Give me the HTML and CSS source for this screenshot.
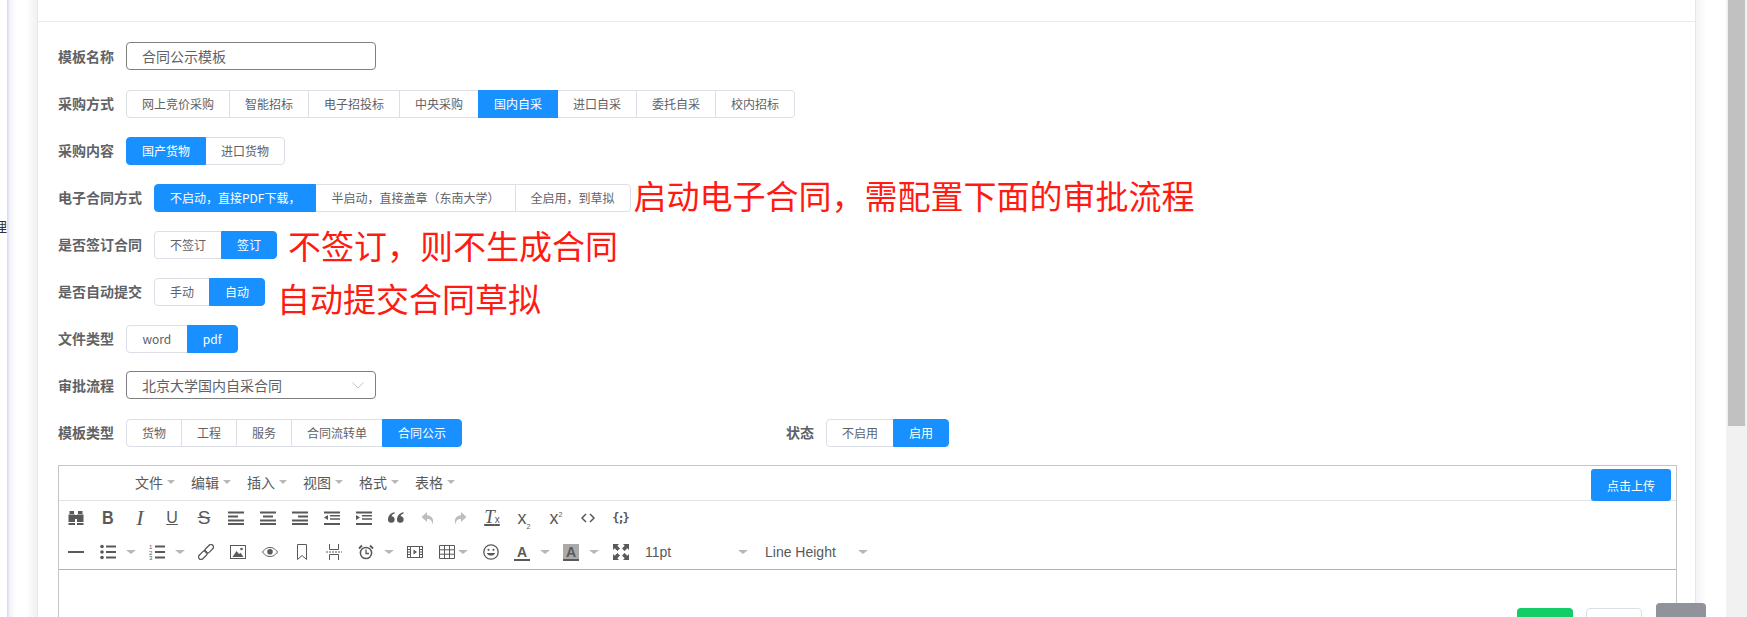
FILE: index.html
```html
<!DOCTYPE html>
<html lang="zh-CN">
<head>
<meta charset="utf-8">
<title>合同模板</title>
<link rel="stylesheet" href="styles.css">
</head>
<body>
<div class="page">
  <aside class="rail"><div class="rail-text"><span>管理</span></div></aside>
  <main class="card">
    <div class="card-head"></div>
    <div class="form">
      <div class="row">
        <label class="label">模板名称</label>
        <div class="box">合同公示模板</div>
      </div>
      <div class="row">
        <label class="label">采购方式</label>
        <div class="seg"><span class="opt">网上竞价采购</span><span class="opt">智能招标</span><span class="opt">电子招投标</span><span class="opt">中央采购</span><span class="opt on">国内自采</span><span class="opt">进口自采</span><span class="opt">委托自采</span><span class="opt">校内招标</span></div>
      </div>
      <div class="row">
        <label class="label">采购内容</label>
        <div class="seg"><span class="opt on">国产货物</span><span class="opt">进口货物</span></div>
      </div>
      <div class="row">
        <label class="label">电子合同方式</label>
        <div class="seg"><span class="opt on">不启动&#xFF0C;直接PDF下载&#xFF0C;</span><span class="opt">半启动&#xFF0C;直接盖章&#xFF08;东南大学&#xFF09;</span><span class="opt">全启用&#xFF0C;到草拟</span></div>
        <span class="note note-a">启动电子合同&#xFF0C;需配置下面的审批流程</span>
      </div>
      <div class="row">
        <label class="label">是否签订合同</label>
        <div class="seg"><span class="opt">不签订</span><span class="opt on">签订</span></div>
        <span class="note note-b">不签订&#xFF0C;则不生成合同</span>
      </div>
      <div class="row">
        <label class="label">是否自动提交</label>
        <div class="seg"><span class="opt">手动</span><span class="opt on">自动</span></div>
        <span class="note note-c">自动提交合同草拟</span>
      </div>
      <div class="row">
        <label class="label">文件类型</label>
        <div class="seg"><span class="opt opt-word">word</span><span class="opt on">pdf</span></div>
      </div>
      <div class="row">
        <label class="label">审批流程</label>
        <div class="box box-select">北京大学国内自采合同
          <svg class="chev" viewBox="0 0 12 7" width="12" height="7"><path d="M.5.5 6 6 11.5.5" fill="none" stroke="#c0c4cc"/></svg>
        </div>
      </div>
      <div class="row">
        <label class="label">模板类型</label>
        <div class="seg"><span class="opt">货物</span><span class="opt">工程</span><span class="opt">服务</span><span class="opt">合同流转单</span><span class="opt on">合同公示</span></div>
        <label class="label label-status">状态</label>
        <div class="seg"><span class="opt">不启用</span><span class="opt on">启用</span></div>
      </div>

      <section class="editor">
        <div class="menubar">
          <span class="menu">文件<i class="caret"></i></span>
          <span class="menu">编辑<i class="caret"></i></span>
          <span class="menu">插入<i class="caret"></i></span>
          <span class="menu">视图<i class="caret"></i></span>
          <span class="menu">格式<i class="caret"></i></span>
          <span class="menu">表格<i class="caret"></i></span>
          <button class="upload">点击上传</button>
        </div>
        <div class="toolbar">
          <span class="tb"><svg class="ico" viewBox="0 0 16 16"><path d="M1.500 1h4.500v3H1.500zM10 1h4.500v3H10zM.5 4.500H7V12H.5zM9 4.500h6.500V12H9zM7 5h2v4H7zM.5 13H7v2H.5zM9 13h6.500v2H9z"/></svg></span>
          <span class="tb"><span class="g g-b">B</span></span>
          <span class="tb"><span class="g g-i">I</span></span>
          <span class="tb"><span class="g g-u">U</span></span>
          <span class="tb"><span class="g g-s">S</span></span>
          <span class="tb"><svg class="ico" viewBox="0 0 16 16"><path d="M0 1.500h16v2H0zM0 5.500h10v2H0zM0 9.500h16v2H0zM0 13h16v2H0z"/></svg></span>
          <span class="tb"><svg class="ico" viewBox="0 0 16 16"><path d="M0 1.500h16v2H0zM3 5.500h10v2H3zM0 9.500h16v2H0zM0 13h16v2H0z"/></svg></span>
          <span class="tb"><svg class="ico" viewBox="0 0 16 16"><path d="M0 1.500h16v2H0zM6 5.500h10v2H6zM0 9.500h16v2H0zM0 13h16v2H0z"/></svg></span>
          <span class="tb"><svg class="ico" viewBox="0 0 16 16"><path d="M0 1.500h16v2H0zM6 5h10v1.600H6zM6 8.200h10v1.600H6zM0 13h16v2H0zM4 5v5L0 7.500z"/></svg></span>
          <span class="tb"><svg class="ico" viewBox="0 0 16 16"><path d="M0 1.500h16v2H0zM6 5h10v1.600H6zM6 8.200h10v1.600H6zM0 13h16v2H0zM0 5v5l4-2.500z"/></svg></span>
          <span class="tb"><svg class="ico" viewBox="0 0 16 16"><path d="M0 9.500a3.300 3.300 0 1 0 6.600 0A3.200 3.200 0 0 0 3.600 6.300C3.900 5 5 4 6.600 3.600V2.200C3 2.600 0 5.600 0 9.500zM9 9.500a3.300 3.300 0 1 0 6.600 0 3.200 3.200 0 0 0-3-3.200c.3-1.300 1.400-2.300 3-2.700V2.200C12 2.600 9 5.600 9 9.500z"/></svg></span>
          <span class="tb"><svg class="ico ico-off" viewBox="0 0 16 16"><path d="M7 2 1.500 7 7 12V9c3 0 5 1 5.500 5.500C14.500 9 11.500 5.500 7 5.200z"/></svg></span>
          <span class="tb"><svg class="ico ico-off" viewBox="0 0 16 16"><path d="M9 2l5.500 5L9 12V9c-3 0-5 1-5.500 5.500C1.500 9 4.500 5.500 9 5.200z"/></svg></span>
          <span class="tb"><span class="g g-t">T<small>x</small></span></span>
          <span class="tb"><span class="g g-x">x<sub>2</sub></span></span>
          <span class="tb"><span class="g g-x">x<sup>2</sup></span></span>
          <span class="tb"><svg class="ico" viewBox="0 0 16 16"><path d="M6 4 2 8l4 4M10 4l4 4-4 4" fill="none" stroke="#595959" stroke-width="1.500"/></svg></span>
          <span class="tb"><span class="g g-c">{;}</span></span>
        </div>
        <div class="toolbar toolbar-last">
          <span class="tb"><svg class="ico" viewBox="0 0 16 16"><path d="M0 7h16v2H0z"/></svg></span>
          <span class="tb"><svg class="ico" viewBox="0 0 16 16"><circle cx="2" cy="2.500" r="1.800"/><circle cx="2" cy="8" r="1.800"/><circle cx="2" cy="13.500" r="1.800"/><path d="M6 1.500h10v2H6zM6 7h10v2H6zM6 12.500h10v2H6z"/></svg></span>
          <span class="split"><i class="caret"></i></span>
          <span class="tb"><svg class="ico" viewBox="0 0 16 16"><text class="mini" x="0" y="5">1</text><text class="mini" x="0" y="10.500">2</text><text class="mini" x="0" y="16">3</text><path d="M6 1.500h10v2H6zM6 7h10v2H6zM6 12.500h10v2H6z"/></svg></span>
          <span class="split"><i class="caret"></i></span>
          <span class="tb"><svg class="ico" viewBox="0 0 16 16"><g transform="rotate(-45 8 8)" fill="none" stroke="#595959" stroke-width="1.300"><rect x="-1.500" y="5.500" width="10" height="5" rx="2.500"/><rect x="7.500" y="5.500" width="10" height="5" rx="2.500"/></g></svg></span>
          <span class="tb"><svg class="ico" viewBox="0 0 16 16"><rect x=".5" y="1.500" width="15" height="13" fill="none" stroke="#595959"/><path d="M2.500 13 6.500 7l2.500 3 1.500-1.200L13.500 13z"/><circle cx="11.500" cy="5" r="1.300"/></svg></span>
          <span class="tb"><svg class="ico" viewBox="0 0 16 16"><path d="M.5 8C3 4.500 5.500 3.500 8 3.500s5 1 7.500 4.500c-2.500 3.500-5 4.500-7.500 4.500S3 11.500.5 8z" fill="none" stroke="#595959"/><circle cx="8" cy="7.800" r="2.800"/></svg></span>
          <span class="tb"><svg class="ico" viewBox="0 0 16 16"><path d="M3.500 .5h9v15L8 11.500l-4.500 4z" fill="none" stroke="#595959"/></svg></span>
          <span class="tb"><svg class="ico" viewBox="0 0 16 16"><path d="M3.500 0v5.500h9V0M3.500 16v-5.500h9V16" fill="none" stroke="#595959"/><path d="M0 8h16" stroke="#595959" stroke-dasharray="2 1"/></svg></span>
          <span class="tb"><svg class="ico" viewBox="0 0 16 16"><circle cx="8" cy="9" r="5.600" fill="none" stroke="#595959" stroke-width="1.500"/><path d="M8 5.500v4h3" fill="none" stroke="#595959" stroke-width="1.300"/><path d="M1 4.500 4 1.500M15 4.500l-3-3" stroke="#595959" stroke-width="1.800"/></svg></span>
          <span class="split"><i class="caret"></i></span>
          <span class="tb"><svg class="ico" viewBox="0 0 16 16"><rect x=".5" y="2.500" width="15" height="11" fill="none" stroke="#595959"/><path d="M3.500 2.500v11M12.500 2.500v11M.5 5.500h3M.5 8h3M.5 10.500h3M12.500 5.500h3M12.500 8h3M12.500 10.500h3" fill="none" stroke="#595959"/><path d="M6.500 5.500v5L10 8z"/></svg></span>
          <span class="tb tb-table"><svg class="ico" viewBox="0 0 16 16"><path d="M.5 1.500h15v13H.5zM5.500 1.500v13M10.500 1.500v13M.5 5.800h15M.5 10.200h15" fill="none" stroke="#595959"/></svg></span>
          <span class="split split-table"><i class="caret"></i></span>
          <span class="tb tb-emoji"><svg class="ico" viewBox="0 0 16 16"><circle cx="8" cy="8" r="7.200" fill="none" stroke="#595959" stroke-width="1.300"/><circle cx="5.500" cy="5.800" r="1.100"/><circle cx="10.500" cy="5.800" r="1.100"/><path d="M3.800 9c1 3.400 7.400 3.400 8.400 0z"/></svg></span>
          <span class="tb"><span class="g g-a">A</span></span>
          <span class="split"><i class="caret"></i></span>
          <span class="tb"><span class="g g-a g-hl">A</span></span>
          <span class="split"><i class="caret"></i></span>
          <span class="tb tb-full"><svg class="ico" viewBox="0 0 16 16"><path d="M0 0h6L4.300 1.700 7 4.400 4.400 7 1.700 4.300 0 6z"/><path d="M16 0v6l-1.700-1.700L11.600 7 9 4.400l2.700-2.700L10 0zM0 16v-6l1.700 1.700L4.400 9 7 11.600l-2.700 2.700L6 16zM16 16h-6l1.700-1.700L9 11.600 11.600 9l2.700 2.700L16 10z"/></svg></span>
          <span class="pick pick-size">11pt<i class="caret"></i></span>
          <span class="pick pick-line">Line Height<i class="caret"></i></span>
        </div>
        <div class="edit-body"></div>
      </section>
    </div>
  </main>
  <div class="gutter"></div>
  <div class="scrollbar"><div class="thumb"></div></div>
</div>
<div class="actions">
  <button class="act act-save"></button>
  <button class="act act-cancel"></button>
  <button class="act act-back"></button>
</div>
</body>
</html>
```
FILE: styles.css
```css
* { box-sizing: border-box; }
html, body { margin: 0; height: 617px; overflow: hidden; background: #fff; }
body { position: relative; font-family: "Noto Sans CJK SC", "Liberation Sans", sans-serif; color: #606266; }

.page { display: flex; height: 617px; }

.rail {
  width: 37px; flex: none; padding-top: 216px;
  background: linear-gradient(90deg, #fff 7px, #d6d6f0 7px, #f3f3fa 10px, #fff 16px, #fff 26px, #f1f1f4 37px);
}
.rail-text { width: 7px; overflow: hidden; display: flex; justify-content: flex-end; font-size: 14px; line-height: 20px; color: #333; white-space: nowrap; }
.rail-text span { flex: none; }

.card { flex: 1; min-width: 0; background: #fff; border-left: 1px solid #e8e8f0; border-right: 1px solid #e6e6f0; }
.card-head { height: 22px; border-bottom: 1px solid #e8e8f0; }
.form { padding: 21px 18px 0 20px; }

.gutter { width: 30px; flex: none; background: linear-gradient(90deg, #f3f3f6, #fff 10px); }
.scrollbar { width: 21px; flex: none; background: #f1f1f1; padding-left: 2px; }
.thumb { width: 17px; height: 426px; background: #c1c1c1; }

.row { display: flex; align-items: center; height: 28px; margin-bottom: 19px; }
.label { font-size: 14px; font-weight: 700; line-height: 20px; margin-right: 12px; margin-top: -2px; white-space: nowrap; }
.label-status { margin-left: 324px; }

.box { position: relative; width: 250px; height: 28px; margin-top: -2px; padding-left: 15px; border: 1px solid #7f7f7f; border-radius: 4px; font-size: 14px; line-height: 26px; }
.box-select { display: flex; align-items: center; justify-content: space-between; padding-right: 11px; }

.seg { display: inline-flex; height: 28px; flex: none; }
.opt { display: block; height: 28px; padding: 0 15px; margin-left: -1px; border: 1px solid #dcdfe6; background: #fff; font-size: 12px; line-height: 26px; white-space: nowrap; }
.opt:first-child { margin-left: 0; border-radius: 4px 0 0 4px; }
.opt:last-child { border-radius: 0 4px 4px 0; }
.opt.on { position: relative; background: #1890ff; border-color: #1890ff; color: #fff; }
.opt-word { padding: 0 15.5px; }

.note { color: #ff1a12; font-size: 33px; line-height: 28px; white-space: nowrap; }
.note-a { margin-left: 3px; margin-top: -6px; }
.note-b { margin-left: 11px; margin-top: 0; }
.note-c { margin-left: 12px; margin-top: 12px; }

.editor { height: 200px; margin-top: -1px; border: 1px solid #c5c5c5; border-bottom: 0; }
.menubar { display: flex; align-items: center; height: 35px; padding: 0 0 2px 76px; border-bottom: 1px solid #e2e2e2; }
.menu { display: flex; align-items: center; gap: 4px; margin-right: 16px; font-size: 14px; line-height: 20px; color: #595959; }
.caret { display: block; width: 0; height: 0; flex: none; border-style: solid; border-width: 4px 4px 0; border-color: #b8b8b8 transparent transparent; }
.upload { align-self: flex-start; width: 80px; height: 32px; margin: 3px 5px 0 auto; padding: 0; border: 0; border-radius: 3px; background: #1890ff; color: #fff; font-family: inherit; font-size: 12px; }

.toolbar { display: flex; align-items: center; height: 34px; padding-left: 1px; }
.toolbar-last { border-bottom: 1px solid #b2b2b2; height: 35px; }
.tb { display: flex; align-items: center; justify-content: center; width: 32px; height: 24px; flex: none; }
.tb-table { width: 25px; justify-content: flex-start; padding-left: 8px; }
.tb-emoji { width: 31px; }
.tb-full { margin-left: 1px; }
.split { display: flex; align-items: center; width: 17px; height: 24px; padding-left: 2px; flex: none; }
.split .caret { border-width: 4px 5px 0; }
.split-table { width: 19px; padding-left: 2px; }
.ico { display: block; width: 16px; height: 16px; fill: #595959; }
.ico-off { fill: #bdbdbd; }
.mini { font-family: "Liberation Sans", sans-serif; font-size: 6px; fill: #595959; }

.g { display: block; color: #595959; font-family: "Liberation Sans", sans-serif; line-height: 16px; text-align: center; white-space: nowrap; }
.g-b { font-size: 19px; font-weight: 700; transform: scaleX(.85); }
.g-i { font-family: "Liberation Serif", serif; font-size: 22px; font-style: italic; }
.g-u { font-size: 16px; text-decoration: underline; }
.g-s { font-size: 19px; text-decoration: line-through; }
.g-t { font-family: "Liberation Serif", serif; font-size: 19px; font-style: italic; text-decoration: underline; text-decoration-thickness: 2px; }
.g-t small { font-family: "Liberation Sans", sans-serif; font-size: 10px; font-style: normal; }
.g-x { font-size: 18px; }
.g-x sub, .g-x sup { font-size: 7px; line-height: 0; }
.g-c { font-family: "DejaVu Sans Mono", monospace; font-size: 12px; font-weight: 700; letter-spacing: -2px; }
.g-a { width: 16px; height: 17px; font-size: 14px; font-weight: 700; border-bottom: 2px solid #595959; }
.g-hl { background: #aaa; }

.pick { display: flex; align-items: center; justify-content: space-between; width: 120px; height: 24px; flex: none; font-family: "Liberation Sans", sans-serif; font-size: 14px; color: #595959; }
.pick-size { padding: 0 9px 0 8px; }
.pick-line { padding: 0 9px 0 8px; }
.pick .caret { border-width: 4px 5px 0; }

.actions { position: absolute; left: 1517px; top: 603px; display: flex; align-items: flex-start; }
.act { display: block; padding: 0; border-radius: 4px; }
.act-save { width: 56px; height: 40px; margin-top: 5px; border: 0; background: #13ce66; }
.act-cancel { width: 56px; height: 40px; margin: 5px 0 0 13px; border: 1px solid #dcdfe6; background: #fff; }
.act-back { width: 50px; height: 40px; margin-left: 14px; border: 0; background: #909399; }
```
